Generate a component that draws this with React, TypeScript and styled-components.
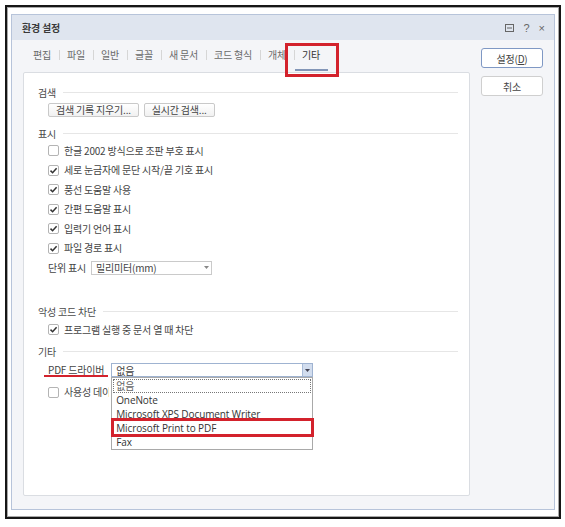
import styled, { createGlobalStyle } from 'styled-components';

const GlobalStyle = createGlobalStyle`
  html, body { margin: 0; padding: 0; background: #fff; }
  body { font-family: "Noto Sans CJK KR", sans-serif; }
  * { box-sizing: border-box; }
`;

const Frame = styled.div`
  margin: 5px 0 0 5px;
  width: 556px;
  height: 514px;
  border: 2px solid #161616;
  box-shadow: inset 0 0 0 1px #a8a8a8;
  padding: 7px 0 0 4px;
`;

const Dialog = styled.div`
  width: 544px;
  height: 496px;
  border: 1px solid #b7c4da;
  background: #f4f5f8;
  display: flex;
  flex-direction: column;
`;

const TitleBar = styled.div`
  flex: none;
  height: 25px;
  background: #dfe5ef;
  display: flex;
  align-items: center;
  padding: 0 9px 0 10px;
`;

const Title = styled.div`
  font-size: 10px;
  font-weight: 700;
  color: #3a3a3a;
  letter-spacing: -0.2px;
`;

const TitleIcons = styled.div`
  margin-left: auto;
  display: flex;
  align-items: center;
  gap: 9px;
  color: #666;
  font-family: "Liberation Sans", sans-serif;
  font-size: 11px;
`;

const Body = styled.div`
  flex: 1;
  display: flex;
  gap: 11px;
  padding: 8px 11px 13px 11px;
`;

const LeftCol = styled.div`
  width: 447px;
  display: flex;
  flex-direction: column;
`;

const Tabs = styled.div`
  height: 24px;
  flex: none;
  display: flex;
  align-items: flex-start;
  gap: 7.5px;
  padding-left: 10px;
  position: relative;
  z-index: 2;
`;

const Tab = styled.div<{ $active?: boolean }>`
  position: relative;
  height: 24px;
  line-height: 14px;
  font-size: 10px;
  letter-spacing: -0.2px;
  white-space: nowrap;
  color: ${p => (p.$active ? '#333' : '#6a6a6a')};

  ${p =>
    p.$active &&
    `
    &::before {
      content: '';
      position: absolute;
      left: -7px;
      right: -8px;
      bottom: 1px;
      height: 2px;
      background: #8396b8;
    }
    &::after {
      content: '';
      position: absolute;
      left: -17px;
      right: -19px;
      top: -5px;
      bottom: -5px;
      border: 3px solid #d3222c;
    }
  `}
`;

const TabSep = styled.div`
  width: 1px;
  height: 10px;
  margin-top: 2px;
  background: #d6d6d6;
`;

const Panel = styled.div`
  flex: 1;
  background: #fff;
  border: 1px solid #dadde2;
  border-radius: 2px;
  padding: 12px 11px 0 14px;
`;

const SectionHeader = styled.div<{ $mt?: number }>`
  display: flex;
  align-items: center;
  gap: 7px;
  height: 14px;
  margin-top: ${p => p.$mt ?? 0}px;
  font-size: 10px;
  letter-spacing: -0.2px;
  color: #4a4a4a;

  &::after {
    content: '';
    flex: 1;
    height: 1px;
    background: #e6e6e6;
  }
`;

const ButtonRow = styled.div`
  display: flex;
  gap: 5px;
  margin: 4px 0 0 10px;
`;

const SmallButton = styled.div`
  height: 14px;
  line-height: 12px;
  padding: 0 7px;
  border: 1px solid #c9c9c9;
  border-radius: 2px;
  background: linear-gradient(#ffffff, #f1f1f1);
  font-size: 10px;
  letter-spacing: -0.2px;
  color: #444;
`;

const Row = styled.div<{ $mt?: number; $h?: number }>`
  display: flex;
  align-items: center;
  gap: 5px;
  height: ${p => p.$h ?? 19.5}px;
  margin: ${p => p.$mt ?? 0}px 0 0 10px;
`;

const Box = styled.span`
  width: 11px;
  height: 11px;
  flex: none;
  border: 1px solid #b4b4b4;
  border-radius: 2px;
  background: #fff;
  display: flex;
  align-items: center;
  justify-content: center;
`;

const Label = styled.span<{ $marked?: boolean; $clip?: number }>`
  position: relative;
  font-size: 10px;
  line-height: 14px;
  letter-spacing: -0.2px;
  color: #444;
  white-space: nowrap;
  ${p => p.$clip && `max-width: ${p.$clip}px; overflow: hidden;`}

  ${p =>
    p.$marked &&
    `
    &::after {
      content: '';
      position: absolute;
      left: -4px;
      right: -4px;
      bottom: 0;
      height: 2.5px;
      background: #d3222c;
    }
  `}
`;

const Combo = styled.div<{ $w: number; $focused?: boolean }>`
  position: relative;
  width: ${p => p.$w}px;
  height: 14px;
  margin-left: ${p => (p.$focused ? 2 : 0)}px;
  border: 1px solid ${p => (p.$focused ? '#9fb3d1' : '#cacaca')};
  background: #fff;
  display: flex;
  align-items: center;
  padding-left: 4px;
  font-size: 10px;
  letter-spacing: -0.2px;
  color: #444;
`;

const ComboArrow = styled.span<{ $focused?: boolean }>`
  margin-left: auto;
  width: 10px;
  height: 100%;
  display: flex;
  align-items: center;
  justify-content: center;
  background: ${p => (p.$focused ? '#d2ddee' : 'transparent')};
  border-left: 1px solid ${p => (p.$focused ? '#a9bcd8' : 'transparent')};
`;

const DropList = styled.div`
  position: absolute;
  z-index: 3;
  top: calc(100% + 1px);
  left: -1px;
  width: calc(100% + 2px);
  border: 1px solid #a9a9a9;
  background: #fff;
  padding: 1px 1px 0;
`;

const ListItem = styled.div<{ $focused?: boolean; $marked?: boolean }>`
  position: relative;
  height: 14px;
  line-height: 14px;
  padding: 0 3px;
  font-family: "Open Sans", "Noto Sans CJK KR", sans-serif;
  font-size: 10px;
  letter-spacing: -0.1px;
  color: ${p => (p.$focused ? '#666' : '#333')};
  outline: ${p => (p.$focused ? '1px dotted #777' : 'none')};
  outline-offset: -1px;

  ${p =>
    p.$marked &&
    `
    &::after {
      content: '';
      position: absolute;
      left: -2px;
      right: -3px;
      top: -3px;
      bottom: -2px;
      border: 3px solid #d3222c;
    }
  `}
`;

const RightCol = styled.div`
  width: 62px;
  display: flex;
  flex-direction: column;
  gap: 8px;
`;

const DialogButton = styled.div<{ $primary?: boolean }>`
  height: 20px;
  border: 1px solid ${p => (p.$primary ? '#7f98c4' : '#cfcfcf')};
  border-radius: 3px;
  background: #fff;
  display: flex;
  align-items: center;
  justify-content: center;
  font-size: 10px;
  letter-spacing: -0.2px;
  color: #444;
`;

const Check = () => (
  <svg width="9" height="9" viewBox="0 0 9 9">
    <path d="M1.5 4.6 L3.6 6.7 L7.6 2.2" fill="none" stroke="#333" strokeWidth="1.5" />
  </svg>
);

const Checkbox = ({ checked }: { checked?: boolean }) => <Box>{checked && <Check />}</Box>;

const Arrow = ({ color }: { color: string }) => (
  <svg width="5" height="3" viewBox="0 0 5 3">
    <path d="M0 0 H5 L2.5 3 Z" fill={color} />
  </svg>
);

const tabs = ['편집', '파일', '일반', '글꼴', '새 문서', '코드 형식', '개체', '기타'];

const displayOptions: [string, boolean][] = [
  ['한글 2002 방식으로 조판 부호 표시', false],
  ['세로 눈금자에 문단 시작/끝 기호 표시', true],
  ['풍선 도움말 사용', true],
  ['간편 도움말 표시', true],
  ['입력기 언어 표시', true],
  ['파일 경로 표시', true],
];

const drivers = ['없음', 'OneNote', 'Microsoft XPS Document Writer', 'Microsoft Print to PDF', 'Fax'];

export default function App() {
  return (
    <>
      <GlobalStyle />
      <Frame>
        <Dialog>
          <TitleBar>
            <Title>환경 설정</Title>
            <TitleIcons>
              <svg width="9" height="8" viewBox="0 0 9 8">
                <rect x="0.5" y="0.5" width="8" height="7" fill="none" stroke="#666" />
                <path d="M2 4 H7" stroke="#666" />
              </svg>
              <span>?</span>
              <span>×</span>
            </TitleIcons>
          </TitleBar>
          <Body>
            <LeftCol>
              <Tabs>
                {tabs.map((t, i) => (
                  <>
                    {i > 0 && <TabSep key={`s${i}`} />}
                    <Tab key={t} $active={t === '기타'}>
                      {t}
                    </Tab>
                  </>
                ))}
              </Tabs>
              <Panel>
                <SectionHeader>검색</SectionHeader>
                <ButtonRow>
                  <SmallButton>검색 기록 지우기...</SmallButton>
                  <SmallButton>실시간 검색...</SmallButton>
                </ButtonRow>

                <SectionHeader $mt={9}>표시</SectionHeader>
                {displayOptions.map(([text, checked], i) => (
                  <Row key={text} $mt={i === 0 ? 1 : 0}>
                    <Checkbox checked={checked} />
                    <Label>{text}</Label>
                  </Row>
                ))}
                <Row>
                  <Label>단위 표시</Label>
                  <Combo $w={121}>
                    밀리미터(mm)
                    <ComboArrow>
                      <Arrow color="#888" />
                    </ComboArrow>
                  </Combo>
                </Row>

                <SectionHeader $mt={26.5}>악성 코드 차단</SectionHeader>
                <Row $mt={2}>
                  <Checkbox checked />
                  <Label>프로그램 실행 중 문서 열 때 차단</Label>
                </Row>

                <SectionHeader $mt={4.5}>기타</SectionHeader>
                <Row $mt={2} $h={20}>
                  <Label $marked>PDF 드라이버</Label>
                  <Combo $w={202} $focused>
                    없음
                    <ComboArrow $focused>
                      <Arrow color="#445" />
                    </ComboArrow>
                    <DropList>
                      {drivers.map((d, i) => (
                        <ListItem key={d} $focused={i === 0} $marked={d === 'Microsoft Print to PDF'}>
                          {d}
                        </ListItem>
                      ))}
                    </DropList>
                  </Combo>
                </Row>
                <Row $mt={2.5}>
                  <Checkbox />
                  <Label $clip={45}>사용성 데이터 수집</Label>
                </Row>
              </Panel>
            </LeftCol>
            <RightCol>
              <DialogButton $primary>
                설정(<u>D</u>)
              </DialogButton>
              <DialogButton>취소</DialogButton>
            </RightCol>
          </Body>
        </Dialog>
      </Frame>
    </>
  );
}
